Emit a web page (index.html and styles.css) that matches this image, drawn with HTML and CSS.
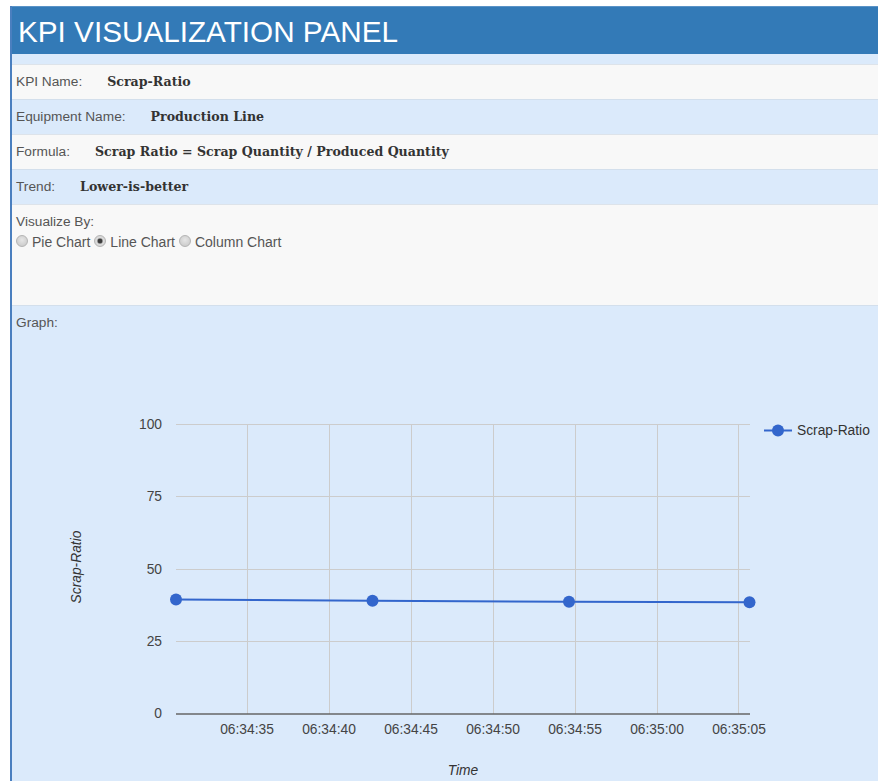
FILE: index.html
```html
<!DOCTYPE html>
<html lang="en">
<head>
<meta charset="utf-8">
<title>KPI Visualization Panel</title>
<link rel="stylesheet" href="styles.css">
</head>
<body>
<div class="panel">
  <div class="panel-heading">
    <h1 class="panel-title">KPI VISUALIZATION PANEL</h1>
  </div>
  <div class="panel-gap"></div>
  <div class="kpi-rows">
    <div class="kpi-row stripe">
      <span class="kpi-label">KPI Name:</span>
      <span class="kpi-value">Scrap-Ratio</span>
    </div>
    <div class="kpi-row">
      <span class="kpi-label">Equipment Name:</span>
      <span class="kpi-value">Production Line</span>
    </div>
    <div class="kpi-row stripe">
      <span class="kpi-label">Formula:</span>
      <span class="kpi-value">Scrap Ratio = Scrap Quantity / Produced Quantity</span>
    </div>
    <div class="kpi-row">
      <span class="kpi-label">Trend:</span>
      <span class="kpi-value">Lower-is-better</span>
    </div>
    <div class="kpi-row stripe visualize">
      <div class="kpi-label">Visualize By:</div>
      <div class="radio-group">
        <label class="radio"><input type="radio" name="viz" value="pie">Pie Chart</label>
        <label class="radio"><input type="radio" name="viz" value="line" checked>Line Chart</label>
        <label class="radio"><input type="radio" name="viz" value="column">Column Chart</label>
      </div>
    </div>
    <div class="kpi-row graph">
      <div class="kpi-label">Graph:</div>
      <svg class="chart" width="862" height="448" viewBox="16 333 862 448" xmlns="http://www.w3.org/2000/svg">
        <!-- horizontal gridlines -->
        <g class="grid">
          <line x1="176" y1="424.5" x2="750" y2="424.5"/>
          <line x1="176" y1="496.5" x2="750" y2="496.5"/>
          <line x1="176" y1="569.5" x2="750" y2="569.5"/>
          <line x1="176" y1="641.5" x2="750" y2="641.5"/>
          <!-- vertical gridlines, one per 5 seconds -->
          <line x1="247.5" y1="424" x2="247.5" y2="714"/>
          <line x1="329.5" y1="424" x2="329.5" y2="714"/>
          <line x1="411.5" y1="424" x2="411.5" y2="714"/>
          <line x1="493.5" y1="424" x2="493.5" y2="714"/>
          <line x1="575.5" y1="424" x2="575.5" y2="714"/>
          <line x1="657.5" y1="424" x2="657.5" y2="714"/>
          <line x1="738.5" y1="424" x2="738.5" y2="714"/>
        </g>
        <line class="baseline" x1="176" y1="714" x2="750" y2="714"/>

        <!-- vertical axis ticks -->
        <g class="tick y-tick">
          <text x="162" y="429">100</text>
          <text x="162" y="501">75</text>
          <text x="162" y="574">50</text>
          <text x="162" y="646">25</text>
          <text x="162" y="718">0</text>
        </g>
        <!-- time axis ticks -->
        <g class="tick x-tick">
          <text x="247" y="734">06:34:35</text>
          <text x="329" y="734">06:34:40</text>
          <text x="411" y="734">06:34:45</text>
          <text x="493" y="734">06:34:50</text>
          <text x="575" y="734">06:34:55</text>
          <text x="657" y="734">06:35:00</text>
          <text x="739" y="734">06:35:05</text>
        </g>

        <text class="axis-title" x="463" y="775" text-anchor="middle">Time</text>
        <text class="axis-title" x="0" y="0" text-anchor="middle" transform="translate(81 567) rotate(-90)">Scrap-Ratio</text>

        <!-- series -->
        <polyline class="series" points="176,599.5 372.5,600.8 569,601.7 749.5,602.3"/>
        <g class="point">
          <circle cx="176" cy="599.5" r="6"/>
          <circle cx="372.5" cy="600.8" r="6"/>
          <circle cx="569" cy="601.7" r="6"/>
          <circle cx="749.5" cy="602.3" r="6"/>
        </g>

        <!-- legend -->
        <line class="series" x1="764" y1="430.5" x2="792" y2="430.5"/>
        <circle class="legend-dot" cx="778" cy="430.5" r="6"/>
        <text class="legend-text" x="797" y="435">Scrap-Ratio</text>
      </svg>
    </div>
  </div>
</div>
</body>
</html>
```

FILE: styles.css
```css
html, body {
  margin: 0;
  padding: 0;
  overflow: hidden;
  background: #ffffff;
}

body {
  font-family: "Liberation Sans", Arial, sans-serif;
  font-size: 13.7px;
  line-height: 20px;
  color: #555;
}

.panel {
  margin: 6px 0 0 10px;
  width: 880px;
  border-left: 2px solid #4a7fbf;
  background: #dbeafb;
}

.panel-heading {
  height: 48px;
  background: #337ab7;
  display: flex;
  align-items: center;
  padding-left: 6px;
  border-top: 1px solid #5a93c7;
  box-sizing: border-box;
}

.panel-title {
  margin: 0;
  font-family: "Liberation Sans", Arial, sans-serif;
  font-weight: normal;
  font-size: 29.7px;
  line-height: 34px;
  color: #ffffff;
  padding-top: 2px;
}

.panel-gap {
  height: 10px;
  background: #dbeafb;
}

.kpi-rows {
  display: flex;
  flex-direction: column;
}

.kpi-row {
  display: flex;
  align-items: baseline;
  gap: 25px;
  padding: 7px 4px;
  border-top: 1px solid #d3dfec;
  background: #dbeafb;
}

.kpi-row.stripe {
  background: #f8f8f8;
  border-top-color: #dde3ea;
}

.kpi-label {
  color: #555;
}

.kpi-value {
  font-family: "DejaVu Serif", "Liberation Serif", serif;
  font-weight: bold;
  font-size: 12.6px;
  color: #333;
}

.kpi-row.visualize {
  flex-direction: column;
  align-items: flex-start;
  gap: 0;
  padding-bottom: 53px;
}

.radio-group {
  display: flex;
  gap: 4px;
}

.radio {
  display: flex;
  align-items: center;
  color: #555;
  font-size: 14px;
}

.radio input {
  appearance: none;
  -webkit-appearance: none;
  width: 12px;
  height: 12px;
  margin: 0 4px 0 0;
  border: 1px solid #b4b4b4;
  border-radius: 50%;
  background: radial-gradient(circle at 50% 40%, #e6e6e6 0%, #cfcfcf 70%, #c4c4c4 100%);
  box-sizing: border-box;
  position: relative;
  top: -1px;
}

.radio input:checked {
  background: radial-gradient(circle, #3c3c3c 0 2px, #9a9a9a 2.6px, #dcdcdc 3.4px, #cfcfcf 100%);
}

.kpi-row.graph {
  flex-direction: column;
  align-items: flex-start;
  gap: 0;
  padding-bottom: 0;
}

.chart {
  display: block;
  font-family: "Liberation Sans", Arial, sans-serif;
  font-size: 13.8px;
}

.grid line {
  stroke: #cccccc;
  stroke-width: 1;
}

.baseline {
  stroke: #666666;
  stroke-width: 1.5;
}

.tick text {
  fill: #444444;
}

.y-tick text {
  text-anchor: end;
}

.x-tick text {
  text-anchor: middle;
}

.axis-title {
  font-style: italic;
  fill: #333333;
}

.series {
  fill: none;
  stroke: #3366cc;
  stroke-width: 2;
}

.point circle,
.legend-dot {
  fill: #3366cc;
}

.legend-text {
  fill: #333333;
}
```
